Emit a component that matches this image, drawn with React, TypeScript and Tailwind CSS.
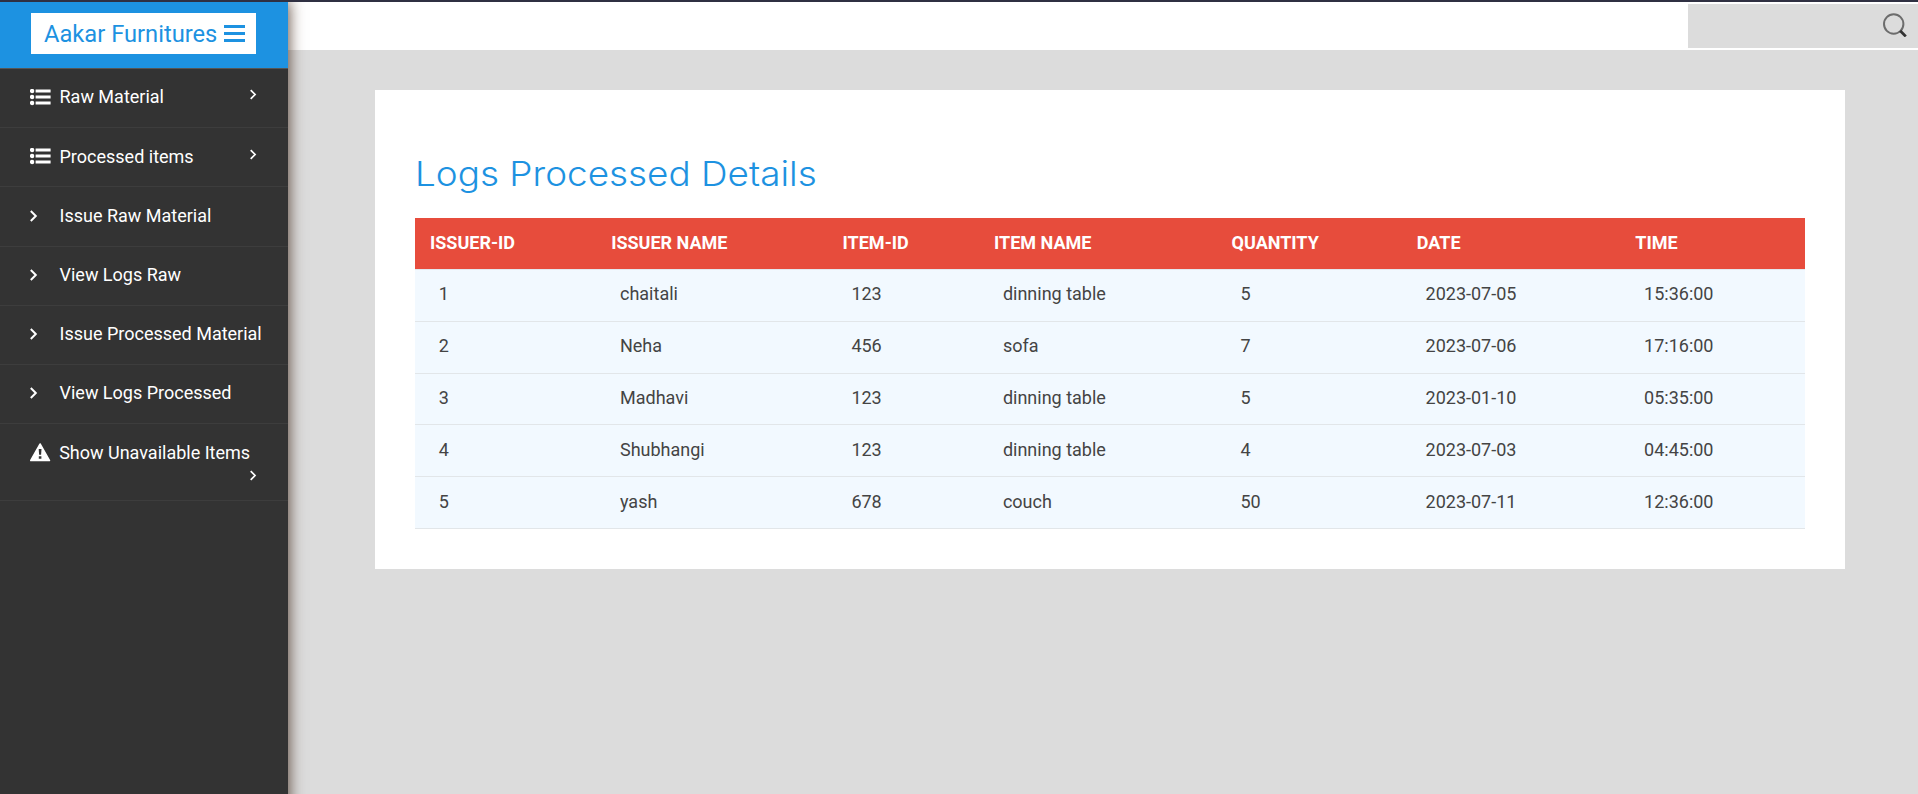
import React from "react";

const sidebarItems = [
  { label: "Raw Material", icon: "list", expandable: true },
  { label: "Processed items", icon: "list", expandable: true },
  { label: "Issue Raw Material", icon: "chevron" },
  { label: "View Logs Raw", icon: "chevron" },
  { label: "Issue Processed Material", icon: "chevron" },
  { label: "View Logs Processed", icon: "chevron" },
];

const headers = ["Issuer-ID", "Issuer Name", "Item-ID", "Item Name", "Quantity", "Date", "Time"];

const rows = [
  ["1", "chaitali", "123", "dinning table", "5", "2023-07-05", "15:36:00"],
  ["2", "Neha", "456", "sofa", "7", "2023-07-06", "17:16:00"],
  ["3", "Madhavi", "123", "dinning table", "5", "2023-01-10", "05:35:00"],
  ["4", "Shubhangi", "123", "dinning table", "4", "2023-07-03", "04:45:00"],
  ["5", "yash", "678", "couch", "50", "2023-07-11", "12:36:00"],
];

const columns = "grid grid-cols-[181.2px_231.4px_151.5px_237.5px_185.2px_218.5px_184.7px]";

function Chevron({ className }: { className: string }) {
  return (
    <svg viewBox="0 0 8 12" className={className} fill="none" stroke="currentColor" strokeWidth="2">
      <path d="M0.8 1 5.8 6 0.8 11" />
    </svg>
  );
}

function ListIcon() {
  return (
    <svg viewBox="0 0 21 17" className="h-[17px] w-[21px]" fill="currentColor">
      <circle cx="2.1" cy="2" r="2.2" />
      <circle cx="2.1" cy="8" r="2.2" />
      <circle cx="2.1" cy="14" r="2.2" />
      <rect x="5.6" y="0.5" width="15" height="3" />
      <rect x="5.6" y="6.5" width="15" height="3" />
      <rect x="5.6" y="12.5" width="15" height="3" />
    </svg>
  );
}

function WarningIcon() {
  return (
    <svg viewBox="0 0 21 19" className="h-[19px] w-[21px]">
      <path d="M10.1 1.1 19.3 17.4H0.9Z" fill="#fff" stroke="#fff" strokeWidth="1.8" strokeLinejoin="round" />
      <path d="M8.7 6.1h2.8l-.4 5.6H9.1ZM8.8 13.2h2.6v2.5H8.8Z" fill="#333" />
    </svg>
  );
}

export default function App() {
  return (
    <div className="flex h-[794px] w-[1918px] flex-col overflow-hidden bg-[#dcdcdc] font-['Roboto',sans-serif] text-lg">
      <div className="z-20 h-0.5 shrink-0 bg-[#2f3042]" />
      <div className="flex min-h-0 flex-1">
        <aside className="z-10 h-[830px] w-72 shrink-0 bg-[#333] text-white shadow-[0_0_14px_1px_rgba(60,35,20,0.8)]">
          <div className="flex h-[67px] border-b border-[#555] bg-[#1d92e1] pt-[11px] pl-[31px]">
            <div className="flex h-[41px] w-[225px] items-center bg-white pl-[13px] text-2xl text-[#1d92e1]">
              <span className="w-[179.5px] pt-0.5 text-[23.7px] whitespace-nowrap">Aakar Furnitures</span>
              <svg viewBox="0 0 21 17" className="h-[17px] w-[21px]" fill="currentColor">
                <rect y="0" width="21" height="3" />
                <rect y="7" width="21" height="3" />
                <rect y="14" width="21" height="3" />
              </svg>
            </div>
          </div>
          <nav>
            {sidebarItems.map((item) => (
              <div key={item.label} className="flex h-[59.2px] border-b border-[#3d3d3d] pl-[30px]">
                <span className="flex h-[56.8px] w-[29.5px] items-center">
                  {item.icon === "list" ? <ListIcon /> : <Chevron className="h-3 w-2" />}
                </span>
                <span className="flex h-[56.8px] items-center whitespace-nowrap">{item.label}</span>
                {item.expandable && <Chevron className="mt-[20.4px] mr-[31px] ml-auto h-[11px] w-[7px]" />}
              </div>
            ))}
            <div className="flex h-[76.8px] border-b border-[#3d3d3d] pl-[30px]">
              <span className="flex h-14 w-[29.5px] items-center">
                <WarningIcon />
              </span>
              <span className="flex h-[56.8px] items-center whitespace-nowrap">Show Unavailable Items</span>
              <Chevron className="mt-[46px] mr-[31px] ml-auto h-[11px] w-[7px]" />
            </div>
          </nav>
        </aside>
        <main className="flex min-w-0 flex-1 flex-col">
          <header className="flex h-12 shrink-0 justify-end bg-white py-0.5">
            <div className="flex w-[230px] justify-end bg-[#dcdcdc] pt-[9px] pr-[11px]">
              <svg viewBox="0 0 24 24" className="size-6" fill="none">
                <circle cx="10.7" cy="11" r="9.7" stroke="#6c6c6c" strokeWidth="2" />
                <path d="m17.2 17.8 5.6 5.6" stroke="#333" strokeWidth="2.8" />
              </svg>
            </div>
          </header>
          <section className="mt-10 ml-[87px] h-[479px] w-[1470px] bg-white px-10 pt-[62px]">
            <h1 className="h-[66px] origin-left scale-x-[1.085] font-['Inter',sans-serif] text-[34px] leading-[44px] font-light whitespace-nowrap text-[#1d92e1]">
              Logs Processed Details
            </h1>
            <div className={`${columns} h-[51px] items-center bg-[#e74c3c] pb-0.5 font-bold text-white uppercase`}>
              {headers.map((header) => (
                <span key={header} className="pl-[15px]">{header}</span>
              ))}
            </div>
            <div className="border-t border-[#e2e8ee] text-[#444]">
              {rows.map((row) => (
                <div key={row[0]} className={`${columns} h-[51.8px] items-center border-b border-[#e2e6e9] bg-[#f2f9ff] pb-0.5`}>
                  {row.map((cell, index) => (
                    <span key={index} className="pl-[23.8px]">{cell}</span>
                  ))}
                </div>
              ))}
            </div>
          </section>
        </main>
      </div>
    </div>
  );
}
